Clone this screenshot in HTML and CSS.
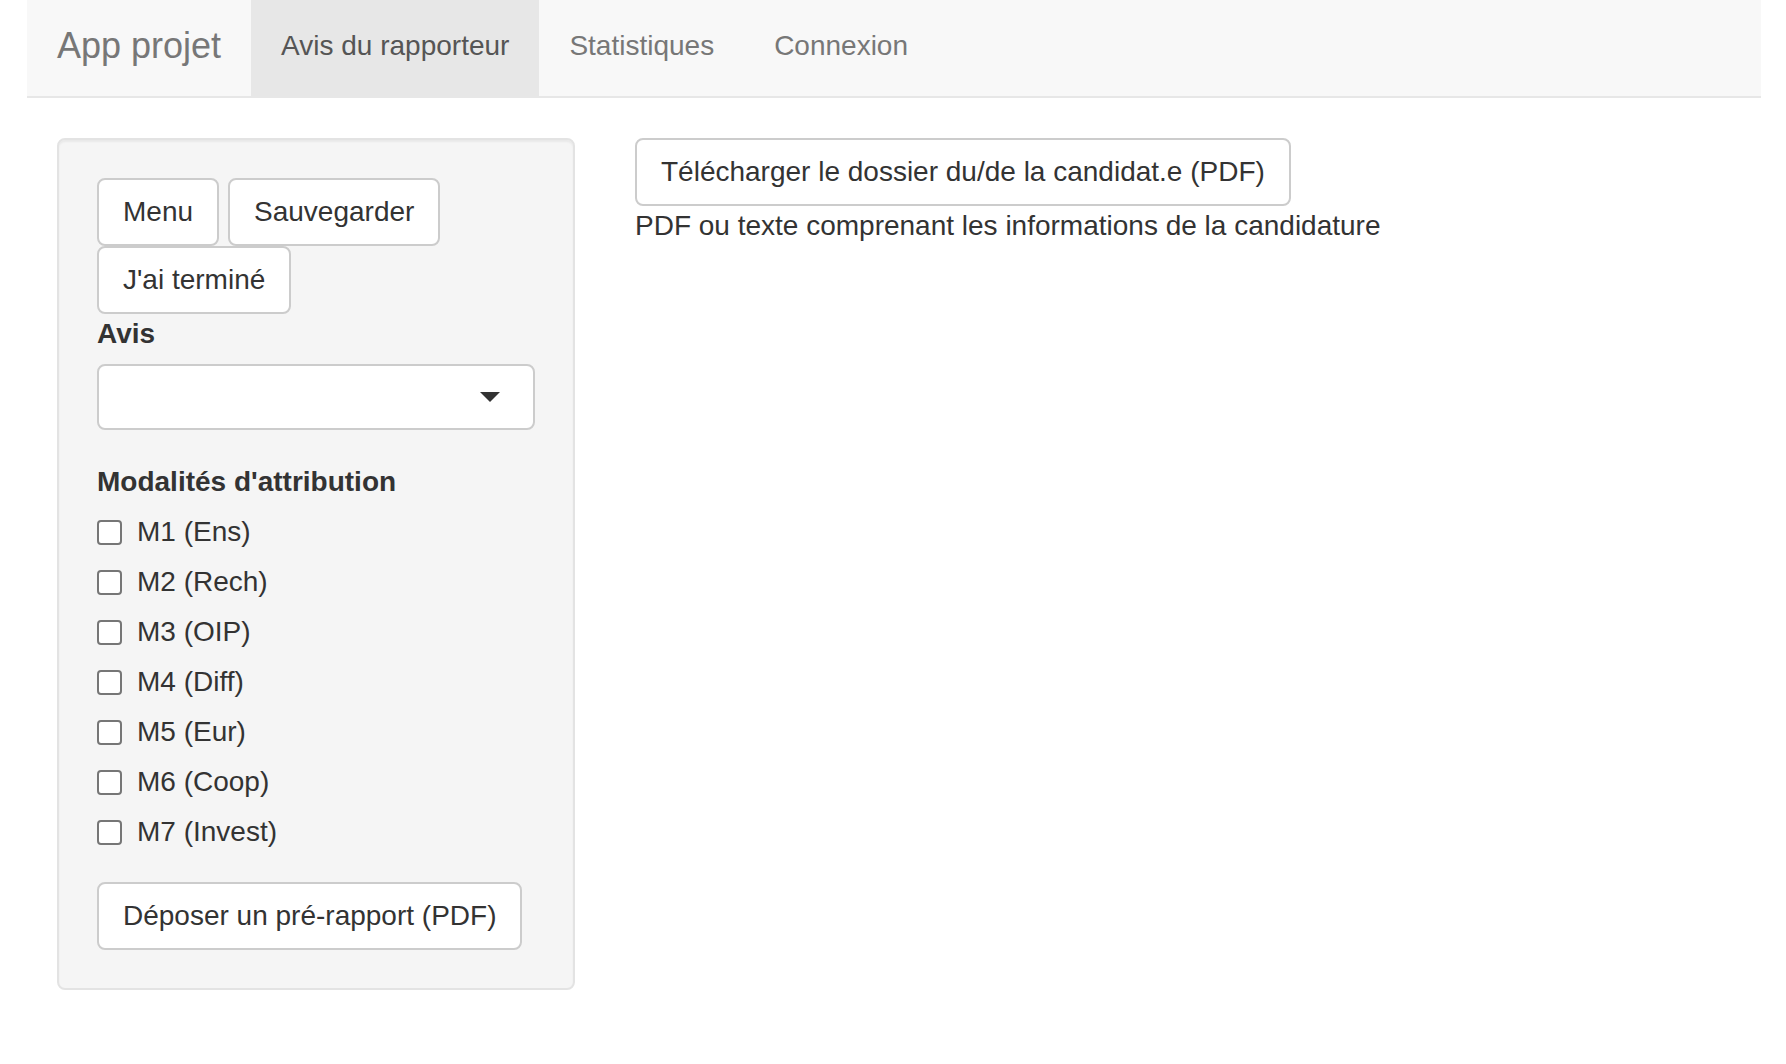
FILE: index.html
```html
<!DOCTYPE html>
<html lang="fr">
<head>
<meta charset="utf-8">
<title>App projet</title>
<link rel="stylesheet" href="styles.css">
</head>
<body>
<nav class="navbar">
  <div class="brand">App projet</div>
  <ul class="nav">
    <li class="active"><a href="#">Avis du rapporteur</a></li>
    <li><a href="#">Statistiques</a></li>
    <li><a href="#">Connexion</a></li>
  </ul>
</nav>
<div class="content">
  <aside class="sidebar">
    <div class="well">
      <div class="btn-row">
        <button class="btn">Menu</button>
        <button class="btn">Sauvegarder</button>
        <button class="btn">J'ai terminé</button>
      </div>
      <label class="field-label">Avis</label>
      <div class="select"><span class="caret"></span></div>
      <label class="field-label">Modalités d'attribution</label>
      <div class="checks">
        <label class="check"><input type="checkbox"><span>M1 (Ens)</span></label>
        <label class="check"><input type="checkbox"><span>M2 (Rech)</span></label>
        <label class="check"><input type="checkbox"><span>M3 (OIP)</span></label>
        <label class="check"><input type="checkbox"><span>M4 (Diff)</span></label>
        <label class="check"><input type="checkbox"><span>M5 (Eur)</span></label>
        <label class="check"><input type="checkbox"><span>M6 (Coop)</span></label>
        <label class="check"><input type="checkbox"><span>M7 (Invest)</span></label>
      </div>
      <button class="btn upload">Déposer un pré-rapport (PDF)</button>
    </div>
  </aside>
  <main class="main">
    <button class="btn">Télécharger le dossier du/de la candidat.e (PDF)</button>
    <p class="help">PDF ou texte comprenant les informations de la candidature</p>
  </main>
</div>
</body>
</html>
```

FILE: styles.css
```css
html, body {
  background: #fff;
}
body {
  margin: 0;
  padding: 0 25px 0 27px;
  font-family: "Liberation Sans", Arial, Helvetica, sans-serif;
  font-size: 28px;
  line-height: 40px;
  color: #333;
}

.navbar {
  display: flex;
  height: 96px;
  background: #f8f8f8;
  border-bottom: 2px solid #e7e7e7;
}
.brand {
  padding: 26px 30px 0;
  font-size: 36px;
  line-height: 40px;
  color: #777;
}
.nav {
  display: flex;
  list-style: none;
  margin: 0;
  padding: 0;
}
.nav a {
  display: block;
  height: 96px;
  box-sizing: border-box;
  padding: 26px 30px 0;
  line-height: 40px;
  color: #777;
  text-decoration: none;
}
.nav .active a {
  background: #e7e7e7;
  color: #555;
}

.content {
  display: flex;
  align-items: flex-start;
  padding-top: 40px;
}
.sidebar {
  width: 518px;
  margin-left: 30px;
  flex: none;
}
.well {
  background: #f5f5f5;
  border: 2px solid #e3e3e3;
  border-radius: 8px;
  padding: 38px;
  box-shadow: inset 0 2px 2px rgba(0, 0, 0, 0.05);
}

.btn {
  font-family: inherit;
  font-size: 28px;
  line-height: 40px;
  padding: 12px 24px;
  border: 2px solid #ccc;
  border-radius: 8px;
  background: #fff;
  color: #333;
  cursor: pointer;
}
.btn-row {
  display: flex;
  flex-wrap: wrap;
  column-gap: 9px;
  row-gap: 0;
}

.field-label {
  display: block;
  font-weight: 700;
  margin-bottom: 10px;
}
.select {
  position: relative;
  height: 66px;
  box-sizing: border-box;
  border: 2px solid #ccc;
  border-radius: 8px;
  background: #fff;
  margin-bottom: 32px;
}
.caret {
  position: absolute;
  right: 33px;
  top: 50%;
  margin-top: -5px;
  width: 0;
  height: 0;
  border-style: solid;
  border-width: 10px 10px 0 10px;
  border-color: #333 transparent transparent transparent;
}

.checks {
  display: flex;
  flex-direction: column;
  row-gap: 10px;
}
.check {
  display: flex;
  align-items: center;
  height: 40px;
}
.check input {
  appearance: none;
  -webkit-appearance: none;
  margin: 1px 15px 0 0;
  width: 25px;
  height: 25px;
  box-sizing: border-box;
  border: 2px solid #767676;
  border-radius: 4px;
  background: #fff;
  flex: none;
}

.upload {
  margin-top: 30px;
}

.main {
  margin-left: 60px;
}
.help {
  margin: 0;
}
```
